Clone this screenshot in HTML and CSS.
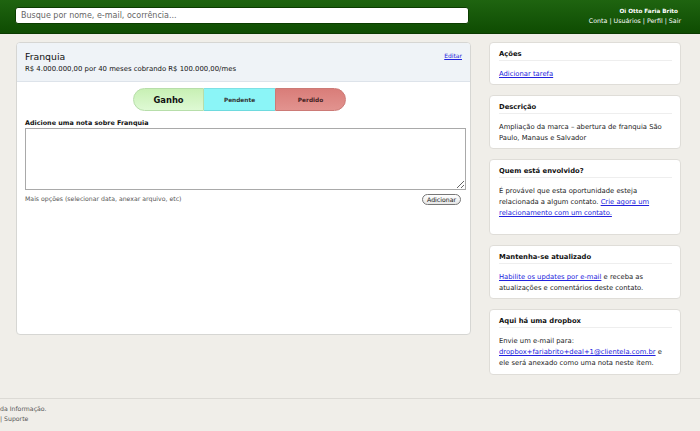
FILE: index.html
```html
<!DOCTYPE html>
<html lang="pt-BR">
<head>
<meta charset="utf-8">
<title>Franquia</title>
<link rel="stylesheet" href="styles.css">
</head>
<body>
<header class="topbar">
  <input class="search" type="text" placeholder="Busque por nome, e-mail, ocorrência...">
  <div class="user">
    <div class="hello">Oi Otto Faria Brito</div>
    <div class="userlinks"><a href="#">Conta</a> | <a href="#">Usuários</a> | <a href="#">Perfil</a> | <a href="#">Sair</a></div>
  </div>
</header>

<div class="page">
  <main class="deal">
    <div class="deal-head">
      <div class="deal-info">
        <h1 class="deal-title">Franquia</h1>
        <div class="deal-sub">R$ 4.000.000,00 por 40 meses cobrando R$ 100.000,00/mes</div>
      </div>
      <a class="edit" href="#">Editar</a>
    </div>
    <div class="deal-body">
      <div class="status">
        <span class="st st-won">Ganho</span>
        <span class="st st-pend">Pendente</span>
        <span class="st st-lost">Perdido</span>
      </div>
      <label class="note-label">Adicione uma nota sobre Franquia</label>
      <textarea class="note"></textarea>
      <div class="note-foot">
        <span class="more">Mais opções (selecionar data, anexar arquivo, etc)</span>
        <button class="add">Adicionar</button>
      </div>
    </div>
  </main>

  <aside class="side">
    <section class="box">
      <h2 class="box-title">Ações</h2>
      <p class="box-text"><a href="#">Adicionar tarefa</a></p>
    </section>
    <section class="box">
      <h2 class="box-title">Descrição</h2>
      <p class="box-text">Ampliação da marca – abertura de franquia São Paulo, Manaus e Salvador</p>
    </section>
    <section class="box box-tall">
      <h2 class="box-title">Quem está envolvido?</h2>
      <p class="box-text">É provável que esta oportunidade esteja relacionada a algum contato. <a href="#">Crie agora um relacionamento com um contato.</a></p>
    </section>
    <section class="box">
      <h2 class="box-title">Mantenha-se atualizado</h2>
      <p class="box-text"><a href="#">Habilite os updates por e-mail</a> e receba as atualizações e comentários deste contato.</p>
    </section>
    <section class="box box-last">
      <h2 class="box-title">Aqui há uma dropbox</h2>
      <p class="box-text">Envie um e-mail para:<br><a href="#">dropbox+fariabrito+deal+1@clientela.com.br</a> e ele será anexado como uma nota neste item.</p>
    </section>
  </aside>
</div>

<footer class="foot">
  <div>da Informação.</div>
  <div>| Suporte</div>
</footer>
</body>
</html>
```

FILE: styles.css
```css
* { box-sizing: border-box; }
html, body { margin: 0; padding: 0; }
body {
  background: #f0eee9;
  font-family: "DejaVu Sans", Verdana, sans-serif;
  font-size: 6px;
  color: #222;
  width: 700px;
  height: 431px;
  overflow: hidden;
}
a { color: #2222dd; text-decoration: underline; }

.topbar {
  height: 34px;
  background: linear-gradient(#1f6410, #0e4c02);
  border-bottom: 1px solid #0a3a00;
  display: flex;
  align-items: flex-start;
  justify-content: space-between;
  padding: 7px 19px 0 15px;
}
.search {
  width: 454px;
  height: 17px;
  border: 1px solid #0b3d00;
  border-radius: 3px;
  background: #fff;
  padding: 0 5px;
  font-family: "DejaVu Sans", Verdana, sans-serif;
  font-size: 8px;
  color: #333;
  outline: none;
}
.search::placeholder { color: #666; }
.user {
  text-align: right;
  color: #fff;
  line-height: 10px;
  margin-top: -1px;
}
.hello { font-weight: bold; font-size: 5.7px; padding-right: 3px; }
.userlinks { font-size: 6.3px; }
.userlinks a { color: #fff; text-decoration: none; }

.page {
  display: flex;
  align-items: flex-start;
  gap: 18px;
  padding: 8px 0 0 16px;
  height: 364px;
}

.deal {
  width: 455px;
  height: 293px;
  background: #fff;
  border: 1px solid #d6d6d3;
  border-radius: 4px;
  overflow: hidden;
}
.deal-head {
  background: #eff3f7;
  border-bottom: 1px solid #dde3ea;
  height: 39px;
  display: flex;
  justify-content: space-between;
  padding: 7px 8px 0 8px;
}
.deal-title {
  margin: 0;
  font-size: 9.3px;
  font-weight: normal;
  line-height: 13px;
  color: #111;
}
.deal-sub { font-size: 6.9px; line-height: 10px; color: #111; margin-top: 1px; }
.edit { font-size: 6px; margin-top: 2px; }

.deal-body { padding: 6px 5px 0 8px; }
.status {
  display: flex;
  margin-left: 108px;
  height: 23px;
}
.st {
  width: 71px;
  display: flex;
  align-items: center;
  justify-content: center;
  font-weight: bold;
  font-size: 5.8px;
  color: #333;
}
.st-won {
  background: linear-gradient(#c8f0b4, #def9d4);
  border: 1px solid #b7deaa;
  border-radius: 12px 0 0 12px;
  font-size: 8.4px;
  color: #111;
}
.st-pend {
  background: #8bf5f7;
  border-top: 1px solid #7ee0e4;
  border-bottom: 1px solid #6edade;
}
.st-lost {
  background: linear-gradient(#d97d79, #e2938f);
  border: 1px solid #cc7a76;
  border-radius: 0 12px 12px 0;
  color: #442222;
}

.note-label {
  display: block;
  font-weight: bold;
  font-size: 6.4px;
  line-height: 9px;
  margin-top: 8px;
  color: #111;
}
.note {
  display: block;
  width: 441px;
  height: 62px;
  border: 1px solid #a9a9a9;
  margin: 0;
  resize: vertical;
}
.note-foot {
  display: flex;
  justify-content: space-between;
  align-items: flex-start;
  padding: 4px 4px 0 0;
}
.more { color: #555; font-size: 6.2px; line-height: 10px; margin-top: 0; }
.add {
  font-family: "DejaVu Sans", Verdana, sans-serif;
  font-size: 6.2px;
  height: 11px;
  padding: 0 4px;
  border: 1px solid #777;
  border-radius: 6px;
  background: linear-gradient(#fff, #e6e6e6);
  color: #111;
  line-height: 9px;
}

.side {
  width: 192px;
  display: flex;
  flex-direction: column;
  gap: 10px;
}
.box {
  background: #fff;
  border: 1px solid #dfddd8;
  border-radius: 4px;
  padding: 6px 8px 4px 9px;
}
.box-tall { padding-bottom: 15px; }
.box-last { padding-bottom: 5px; }
.box-title {
  margin: 0 0 8px 0;
  font-size: 6.8px;
  font-weight: bold;
  line-height: 11px;
  border-bottom: 1px solid #eeeeee;
  color: #111;
}
.box-text {
  margin: 0;
  font-size: 6.8px;
  line-height: 11px;
  color: #222;
}

.foot {
  border-top: 1px solid #dcdad5;
  padding-top: 5px;
  color: #555;
  font-size: 6.2px;
  line-height: 10px;
}
```
